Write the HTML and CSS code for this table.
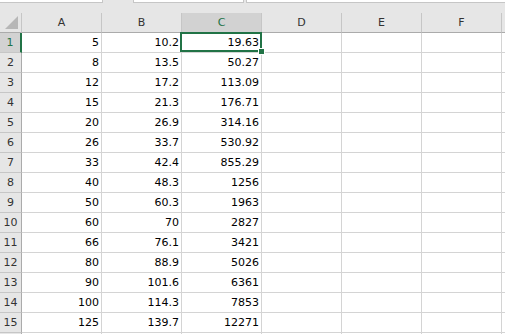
FILE: index.html
```html
<!DOCTYPE html>
<html lang="en">
<head>
  <meta charset="UTF-8" />
  <title>Sheet1</title>
  <link rel="stylesheet" href="styles.css">
</head>
<body>

  <div class="topbar">
    <div class="box box-name"></div>
    <div class="box box-mid"></div>
    <div class="box box-formula"></div>
  </div>

  <div class="viewport">
  <div class="sheet">
    <div class="corner">
      <svg width="14" height="14" viewBox="0 0 14 14"><polygon points="13,0 13,13 0,13" fill="#b7b7b7"/></svg>
    </div>
    <div class="col-head">A</div>
    <div class="col-head">B</div>
    <div class="col-head active">C</div>
    <div class="col-head">D</div>
    <div class="col-head">E</div>
    <div class="col-head">F</div>
    <div class="col-head"></div>

    <div class="row-head active">1</div>
    <div class="cell">5</div><div class="cell">10.2</div><div class="cell selected">19.63<span class="handle"></span></div><div class="cell"></div><div class="cell"></div><div class="cell"></div><div class="cell"></div>

    <div class="row-head">2</div>
    <div class="cell">8</div><div class="cell">13.5</div><div class="cell">50.27</div><div class="cell"></div><div class="cell"></div><div class="cell"></div><div class="cell"></div>

    <div class="row-head">3</div>
    <div class="cell">12</div><div class="cell">17.2</div><div class="cell">113.09</div><div class="cell"></div><div class="cell"></div><div class="cell"></div><div class="cell"></div>

    <div class="row-head">4</div>
    <div class="cell">15</div><div class="cell">21.3</div><div class="cell">176.71</div><div class="cell"></div><div class="cell"></div><div class="cell"></div><div class="cell"></div>

    <div class="row-head">5</div>
    <div class="cell">20</div><div class="cell">26.9</div><div class="cell">314.16</div><div class="cell"></div><div class="cell"></div><div class="cell"></div><div class="cell"></div>

    <div class="row-head">6</div>
    <div class="cell">26</div><div class="cell">33.7</div><div class="cell">530.92</div><div class="cell"></div><div class="cell"></div><div class="cell"></div><div class="cell"></div>

    <div class="row-head">7</div>
    <div class="cell">33</div><div class="cell">42.4</div><div class="cell">855.29</div><div class="cell"></div><div class="cell"></div><div class="cell"></div><div class="cell"></div>

    <div class="row-head">8</div>
    <div class="cell">40</div><div class="cell">48.3</div><div class="cell">1256</div><div class="cell"></div><div class="cell"></div><div class="cell"></div><div class="cell"></div>

    <div class="row-head">9</div>
    <div class="cell">50</div><div class="cell">60.3</div><div class="cell">1963</div><div class="cell"></div><div class="cell"></div><div class="cell"></div><div class="cell"></div>

    <div class="row-head">10</div>
    <div class="cell">60</div><div class="cell">70</div><div class="cell">2827</div><div class="cell"></div><div class="cell"></div><div class="cell"></div><div class="cell"></div>

    <div class="row-head">11</div>
    <div class="cell">66</div><div class="cell">76.1</div><div class="cell">3421</div><div class="cell"></div><div class="cell"></div><div class="cell"></div><div class="cell"></div>

    <div class="row-head">12</div>
    <div class="cell">80</div><div class="cell">88.9</div><div class="cell">5026</div><div class="cell"></div><div class="cell"></div><div class="cell"></div><div class="cell"></div>

    <div class="row-head">13</div>
    <div class="cell">90</div><div class="cell">101.6</div><div class="cell">6361</div><div class="cell"></div><div class="cell"></div><div class="cell"></div><div class="cell"></div>

    <div class="row-head">14</div>
    <div class="cell">100</div><div class="cell">114.3</div><div class="cell">7853</div><div class="cell"></div><div class="cell"></div><div class="cell"></div><div class="cell"></div>

    <div class="row-head">15</div>
    <div class="cell">125</div><div class="cell">139.7</div><div class="cell">12271</div><div class="cell"></div><div class="cell"></div><div class="cell"></div><div class="cell"></div>

    <div class="row-head"></div>
    <div class="cell"></div><div class="cell"></div><div class="cell"></div><div class="cell"></div><div class="cell"></div><div class="cell"></div><div class="cell"></div>
  </div>
  </div>

</body>
</html>
```

FILE: styles.css
```css
html, body {
  margin: 0;
  padding: 0;
  height: 100%;
  overflow: hidden;
}

body {
  background-color: #fff;
  font-family: 'DejaVu Sans', sans-serif;
  font-size: 11px;
  color: #000;
}

.topbar {
  display: flex;
  height: 13px;
  background-color: #e6e6e6;
}

.box {
  box-sizing: border-box;
  height: 3px;
  background-color: #fff;
  border: 1px solid #c6c6c6;
  border-top: none;
}

.box-name {
  width: 103px;
  border-left: none;
}

.box-mid {
  width: 111px;
  margin-left: 30px;
}

.box-formula {
  flex: 1;
  margin-left: 2px;
  border-right: none;
}

.viewport {
  height: 321px;
  overflow: hidden;
}

.sheet {
  display: grid;
  grid-template-columns: 22px repeat(7, 80px);
  grid-auto-rows: 20px;
  width: 582px;
}

.sheet > div {
  box-sizing: border-box;
  border-right: 1px solid #d4d4d4;
  border-bottom: 1px solid #d4d4d4;
  white-space: nowrap;
}

.corner {
  display: flex;
  align-items: flex-end;
  justify-content: flex-end;
  padding: 0 2px 2px 0;
  background-color: #e6e6e6;
}

.sheet > .corner,
.sheet > .col-head {
  border-bottom-color: #ababab;
  border-right-color: #c6c6c6;
}

.col-head {
  background-color: #e6e6e6;
  color: #333;
  text-align: center;
  line-height: 19px;
}

.col-head.active {
  background-color: #d2d2d2;
  color: #217346;
}

.row-head {
  background-color: #e6e6e6;
  color: #333;
  text-align: center;
  line-height: 18px;
  padding-top: 1px;
}

.sheet > .row-head {
  border-right-color: #ababab;
  border-bottom-color: #c6c6c6;
}

.sheet > .row-head.active {
  background-color: #d2d2d2;
  color: #217346;
  border-right: 2px solid #217346;
}

.cell {
  text-align: right;
  padding: 1px 2px 0 2px;
  line-height: 18px;
}

.cell.selected {
  position: relative;
}

.cell.selected::after {
  content: '';
  position: absolute;
  top: -1px;
  left: -2px;
  right: -1px;
  bottom: 0;
  border: 2px solid #217346;
  z-index: 1;
}

.handle {
  position: absolute;
  right: -3px;
  bottom: -2px;
  width: 5px;
  height: 5px;
  background-color: #217346;
  box-shadow: 0 0 0 1px #fff;
  z-index: 2;
}
```
